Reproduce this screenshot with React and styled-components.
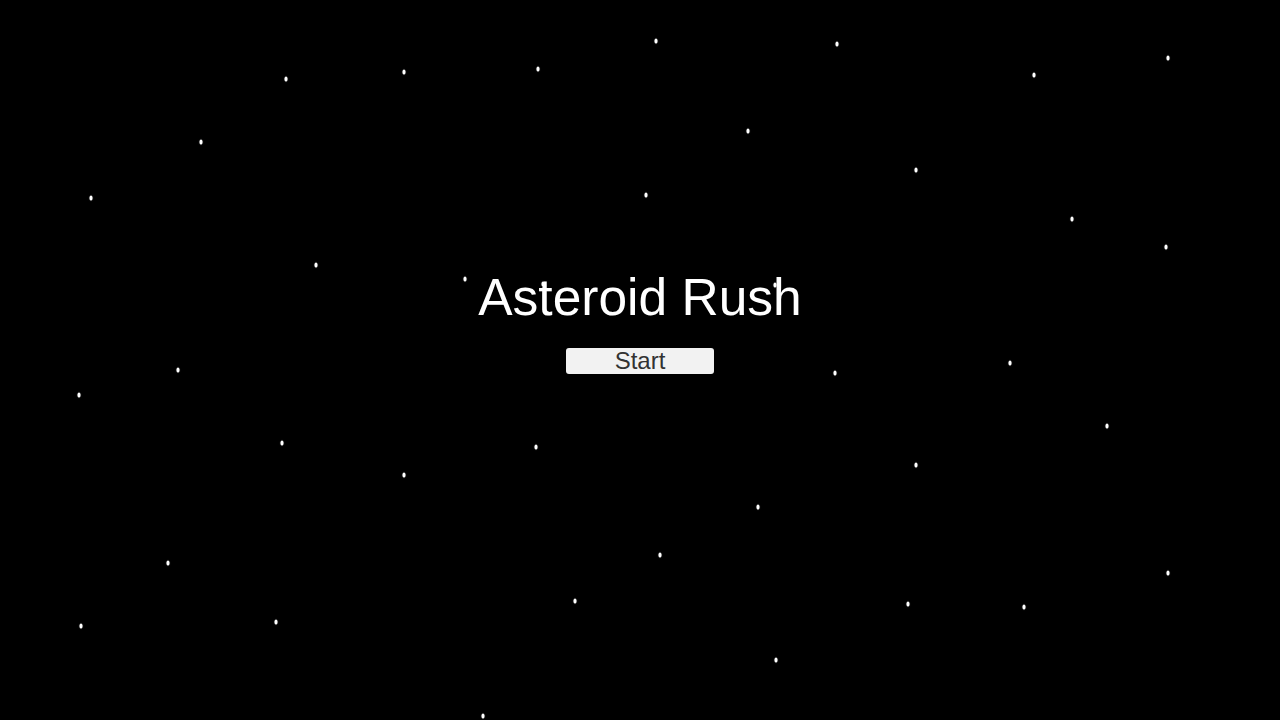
import React from 'react';
import styled, { createGlobalStyle } from "styled-components";

const Global = createGlobalStyle`
    html, body {
        margin: 0;
        padding: 0;
        background: #000;
    }
`

const S = {}

S.Screen = styled.div`
    position: relative;
    width: 100vw;
    height: 100vh;
    overflow: hidden;
    background-color: #000;
    display: flex;
    flex-direction: column;
    align-items: center;
    padding-top: 272px;
    box-sizing: border-box;
    font-family: 'Liberation Sans', Arial, sans-serif;
`

S.Star = styled.div`
    position: absolute;
    width: 3px;
    height: 5px;
    border-radius: 50%;
    background: #fff;
    box-shadow: 0 0 1px rgba(255, 255, 255, 0.6);
    transform: translate(-50%, -50%);
`

S.Title = styled.h1`
    position: relative;
    z-index: 1;
    margin: 0;
    font-size: 51.5px;
    line-height: 1;
    font-weight: 400;
    color: #fff;
`

S.StartBtn = styled.button`
    position: relative;
    z-index: 1;
    margin-top: 24px;
    width: 148px;
    height: 26px;
    padding: 0;
    border: none;
    border-radius: 3px;
    background-color: #f2f2f2;
    color: #333;
    font-family: 'Liberation Sans', Arial, sans-serif;
    font-size: 24px;
    line-height: 26px;
    cursor: pointer;
`

// star field, positions measured from the mockup
const stars = [
    [656, 41], [837, 44], [286, 79], [404, 72], [538, 69], [1034, 75], [1168, 58],
    [201, 142], [748, 131], [91, 198], [646, 195], [916, 170], [1072, 219], [1166, 247],
    [316, 265], [465, 279], [543, 284], [775, 285],
    [178, 370], [79, 395], [835, 373], [1010, 363], [1107, 426], [282, 443], [536, 447],
    [404, 475], [916, 465], [758, 507], [168, 563], [660, 555], [1168, 573], [575, 601],
    [908, 604], [1024, 607], [81, 626], [276, 622], [776, 660], [483, 716],
]

function App(){
    return(
        <S.Screen>
            <Global />
            {stars.map(([x, y], i) => (
                <S.Star key={i} style={{ left: x, top: y }} />
            ))}
            <S.Title>Asteroid Rush</S.Title>
            <S.StartBtn>Start</S.StartBtn>
        </S.Screen>
    )
}

export default App;
